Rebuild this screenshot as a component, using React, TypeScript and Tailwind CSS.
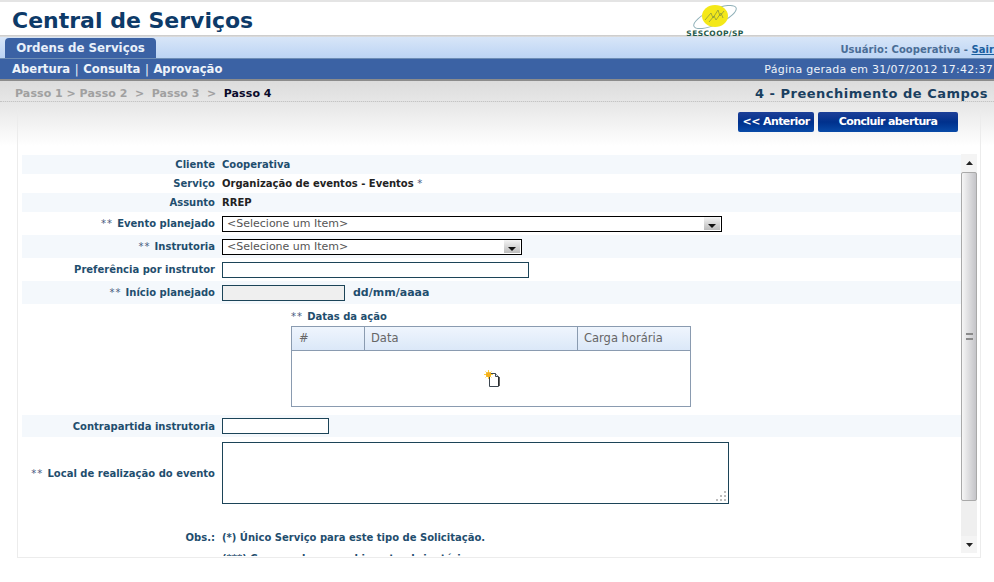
import type { ReactNode } from "react";

const label = "text-[10px] font-bold whitespace-nowrap text-[#1f4e6e]";

function Stars() {
  return <span className="font-normal tracking-[1px] text-[#4a5a80]">** </span>;
}

function Row({
  shaded,
  height,
  name,
  children,
}: {
  shaded?: boolean;
  height: string;
  name: ReactNode;
  children?: ReactNode;
}) {
  return (
    <div className={`flex items-center ${height} ${shaded ? "bg-[#f4f8fc]" : ""}`}>
      <div className={`w-[193px] shrink-0 text-right ${label}`}>{name}</div>
      <div className="ml-[7px] flex min-w-0 flex-1 items-center">{children}</div>
    </div>
  );
}

function SelectBox({ width }: { width: string }) {
  return (
    <div className={`flex h-[16px] ${width} items-center justify-between border border-black bg-white pl-[4px] pr-px`}>
      <span className="text-[11px] leading-none text-[#555]">&lt;Selecione um Item&gt;</span>
      <span className="flex h-[13px] w-[16px] items-end justify-center bg-gradient-to-b from-[#f4f4f4] to-[#bcbcbc] pb-[2px]">
        <svg width="8" height="4" viewBox="0 0 8 4">
          <path d="M0 0h8L4 4z" fill="#111" />
        </svg>
      </span>
    </div>
  );
}

function Logo() {
  return (
    <div className="flex w-[64px] flex-col items-center pt-px">
      <svg width="50" height="26" viewBox="0 0 50 26">
        <ellipse cx="25" cy="14" rx="23" ry="7.5" transform="rotate(-24 25 14)" fill="none" stroke="#8fb0b8" strokeWidth="1" />
        <ellipse cx="25" cy="13" rx="13" ry="11" fill="#f4e818" />
        <path d="M15 17l6-7 2 5 5-8 2 6 4-5M19 19l5-6 2 4 5-7 2 5" fill="none" stroke="#8a9a3c" strokeWidth="0.8" />
      </svg>
      <span className="mt-px whitespace-nowrap text-[7.5px] font-bold leading-none tracking-[0.4px] text-[#1f5a4a]">SESCOOP/SP</span>
    </div>
  );
}

function ScrollBar() {
  return (
    <div className="flex h-[399px] w-[16px] shrink-0 flex-col bg-[#efefef]">
      <div className="flex h-[18px] shrink-0 items-center justify-center bg-[#f4f4f4]">
        <svg width="7" height="4" viewBox="0 0 7 4">
          <path d="M3.5 0L7 4H0z" fill="#222" />
        </svg>
      </div>
      <div className="flex h-[329px] shrink-0 items-center justify-center rounded-[2px] border border-[#a9a9a9] bg-gradient-to-r from-[#f6f6f6] to-[#c4c4c8]">
        <div className="h-[7px] w-[7px] border-y-2 border-[#8a8a8a]" />
      </div>
      <div className="flex-1" />
      <div className="flex h-[17px] shrink-0 items-center justify-center bg-[#f4f4f4]">
        <svg width="7" height="4" viewBox="0 0 7 4">
          <path d="M0 0h7L3.5 4z" fill="#222" />
        </svg>
      </div>
    </div>
  );
}

function NewDocIcon() {
  return (
    <svg width="18" height="18" viewBox="0 0 18 18">
      <path d="M5.5 3.5h6l3 3v10h-9z" fill="#fff" stroke="#3c4650" strokeWidth="1" />
      <path d="M11.5 3.5v3h3" fill="#dfe6ee" stroke="#3c4650" strokeWidth="1" />
      <path d="M15 16V7" stroke="#222" strokeWidth="1.4" />
      <path d="M4.5 0v9M0 4.5h9M1.5 1.5l6 6M7.5 1.5l-6 6" stroke="#f8d040" strokeWidth="1" />
      <circle cx="4.5" cy="4.5" r="2.6" fill="#f5b01c" />
    </svg>
  );
}

export default function App() {
  return (
    <div className="h-[582px] w-[994px] overflow-hidden bg-white font-['DejaVu_Sans',Verdana,sans-serif]">
      <div className="h-[2px] bg-[#e4e4e4]" />

      {/* Header */}
      <header className="flex h-[33px] items-start bg-white pl-[12px]">
        <h1 className="mt-[8px] w-[671px] text-[22px] font-bold leading-none text-[#0d3a68]">Central de Serviços</h1>
        <Logo />
      </header>

      {/* Tabs */}
      <div className="h-[2px] bg-gradient-to-b from-[#c8c8c8] to-[#e0e0e0]" />
      <div className="flex h-[22px] items-end justify-between border-b border-[#6d8db5] bg-gradient-to-b from-[#d8e6f8] to-[#bcd4f4] pl-[5px]">
        <div className="flex h-[20px] w-[151px] items-center justify-center rounded-t-[4px] bg-[#3b62a4] pt-[2px] text-[11.8px] font-bold text-[#e8f0fa]">
          Ordens de Serviços
        </div>
        <div className="mb-[3px] whitespace-nowrap text-[10px] font-bold leading-none tracking-[0.05px] text-[#4a6d96]">
          Usuário: Cooperativa - <span className="text-[#1c5f9e] underline">Sair</span>
        </div>
      </div>

      {/* Menu */}
      <nav className="flex h-[20px] items-center justify-between bg-[#3b62a4] pl-[12px] pr-px pt-[2px]">
        <div className="text-[11.6px] font-bold text-[#eef3fa]">
          Abertura <span className="mx-[0.5px] font-normal">|</span> Consulta <span className="mx-[0.5px] font-normal">|</span> Aprovação
        </div>
        <div className="whitespace-nowrap text-[11px] tracking-[0.25px] text-[#eef3fa]">Página gerada em 31/07/2012 17:42:37</div>
      </nav>
      <div className="h-[2px] bg-[#8c8c8c]" />

      {/* Steps */}
      <div className="flex h-[21px] items-center justify-between border-b border-dotted border-[#c4c4c4] bg-gradient-to-b from-[#dcdcdc] to-[#e6e6e6] pl-[15px] pr-[6px] pt-[6px]">
        <div className="whitespace-pre text-[11px] font-bold tracking-[0.1px] text-[#a0a0a0] [word-spacing:-0.2px]">
          Passo 1 &gt; Passo 2  &gt;  Passo 3  &gt;  <span className="text-[#0a0a2a]">Passo 4</span>
        </div>
        <div className="text-[13px] font-bold tracking-[0.5px] text-[#1a3f60]">4 - Preenchimento de Campos</div>
      </div>

      {/* Panel, with the grey fade running across the full page behind it */}
      <div className="bg-gradient-to-b from-[#e6e6e6] to-white bg-[length:100%_44px] bg-no-repeat pt-[8px]">
        <main className="ml-[17px] h-[448px] w-[964px] border-x border-b border-[#ececec]">
          <div className="flex h-[44px] items-start justify-end gap-[4px] pr-[22px] pt-[2px]">
            <button className="h-[20px] w-[76px] rounded-[2px] bg-gradient-to-b from-[#1c3f98] via-[#00308c] to-[#0a4aa8] pt-px text-[11px] font-bold tracking-[-0.6px] text-white">
              &lt;&lt; Anterior
            </button>
            <button className="h-[20px] w-[140px] rounded-[2px] bg-gradient-to-b from-[#1c3f98] via-[#00308c] to-[#0a4aa8] pt-px text-[11px] font-bold tracking-[-0.6px] text-white">
              Concluir abertura
            </button>
          </div>

          <div className="ml-[4px] flex items-start">
            <div className="h-[402px] w-[939px] shrink-0 overflow-hidden pt-px">
              <Row shaded height="h-[19px]" name="Cliente">
                <span className="text-[10px] font-bold text-[#1f4e6e]">Cooperativa</span>
              </Row>
              <Row height="h-[19px]" name="Serviço">
                <span className="text-[10px] font-bold text-[#222]">
                  Organização de eventos - Eventos <span className="font-normal text-[#4a5a80]">*</span>
                </span>
              </Row>
              <Row shaded height="h-[19px]" name="Assunto">
                <span className="text-[10px] font-bold text-[#222]">RREP</span>
              </Row>
              <Row height="h-[23px]" name={<><Stars />Evento planejado</>}>
                <SelectBox width="w-[500px]" />
              </Row>
              <Row shaded height="h-[23px]" name={<><Stars />Instrutoria</>}>
                <SelectBox width="w-[300px]" />
              </Row>
              <Row height="h-[23px]" name="Preferência por instrutor">
                <div className="h-[16px] w-[307px] border border-[#1c4458] bg-white" />
              </Row>
              <Row shaded height="h-[23px]" name={<><Stars />Início planejado</>}>
                <div className="h-[16px] w-[123px] border border-[#1c4458] bg-[#efefef]" />
                <span className="ml-[8px] pt-px text-[11px] font-bold text-[#1f4e6e]">dd/mm/aaaa</span>
              </Row>

              {/* Datas da ação */}
              <div className="ml-[269px] h-[111px] w-[400px] pt-[5px]">
                <div className={`h-[17px] ${label}`}>
                  <Stars />Datas da ação
                </div>
                <div className="h-[81px] border border-[#8a9bb0]">
                  <div className="flex h-[24px] border-b border-[#8a9bb0] bg-gradient-to-b from-[#eff5fd] to-[#dbe8f8] text-[11.5px] text-[#666]">
                    <div className="flex w-[73px] items-center border-r border-[#8a9bb0] pl-[7px]">#</div>
                    <div className="flex w-[213px] items-center border-r border-[#8a9bb0] pl-[6px]">Data</div>
                    <div className="flex flex-1 items-center pl-[6px]">Carga horária</div>
                  </div>
                  <div className="flex h-[55px] items-center justify-center pl-[3px]">
                    <NewDocIcon />
                  </div>
                </div>
              </div>

              <Row shaded height="h-[22px]" name="Contrapartida instrutoria">
                <div className="h-[16px] w-[107px] border border-[#1c4458] bg-white" />
              </Row>
              <div className="flex h-[67px] items-center pt-[4px]">
                <div className={`w-[193px] shrink-0 pt-px text-right ${label}`}>
                  <Stars />Local de realização do evento
                </div>
                <div className="relative ml-[7px] h-[62px] w-[507px] border border-[#1c4458] bg-white">
                  <svg className="absolute bottom-[2px] right-[2px]" width="11" height="11" viewBox="0 0 11 11">
                    <path d="M9 1h2v2H9zM5 5h2v2H5zM9 5h2v2H9zM1 9h2v2H1zM5 9h2v2H5zM9 9h2v2H9z" fill="#bdbdbd" />
                  </svg>
                </div>
              </div>
              <div className="flex pt-[23px]">
                <div className={`w-[193px] shrink-0 text-right leading-[22px] ${label}`}>Obs.:</div>
                <div className="ml-[7px] text-[10px] font-bold text-[#1f4e6e]">
                  <div className="leading-[22px]">(*) Único Serviço para este tipo de Solicitação.</div>
                  <div className="leading-[19px]">(***) Campos de preenchimento obrigatório.</div>
                </div>
              </div>
            </div>
            <ScrollBar />
          </div>
        </main>
      </div>
    </div>
  );
}
